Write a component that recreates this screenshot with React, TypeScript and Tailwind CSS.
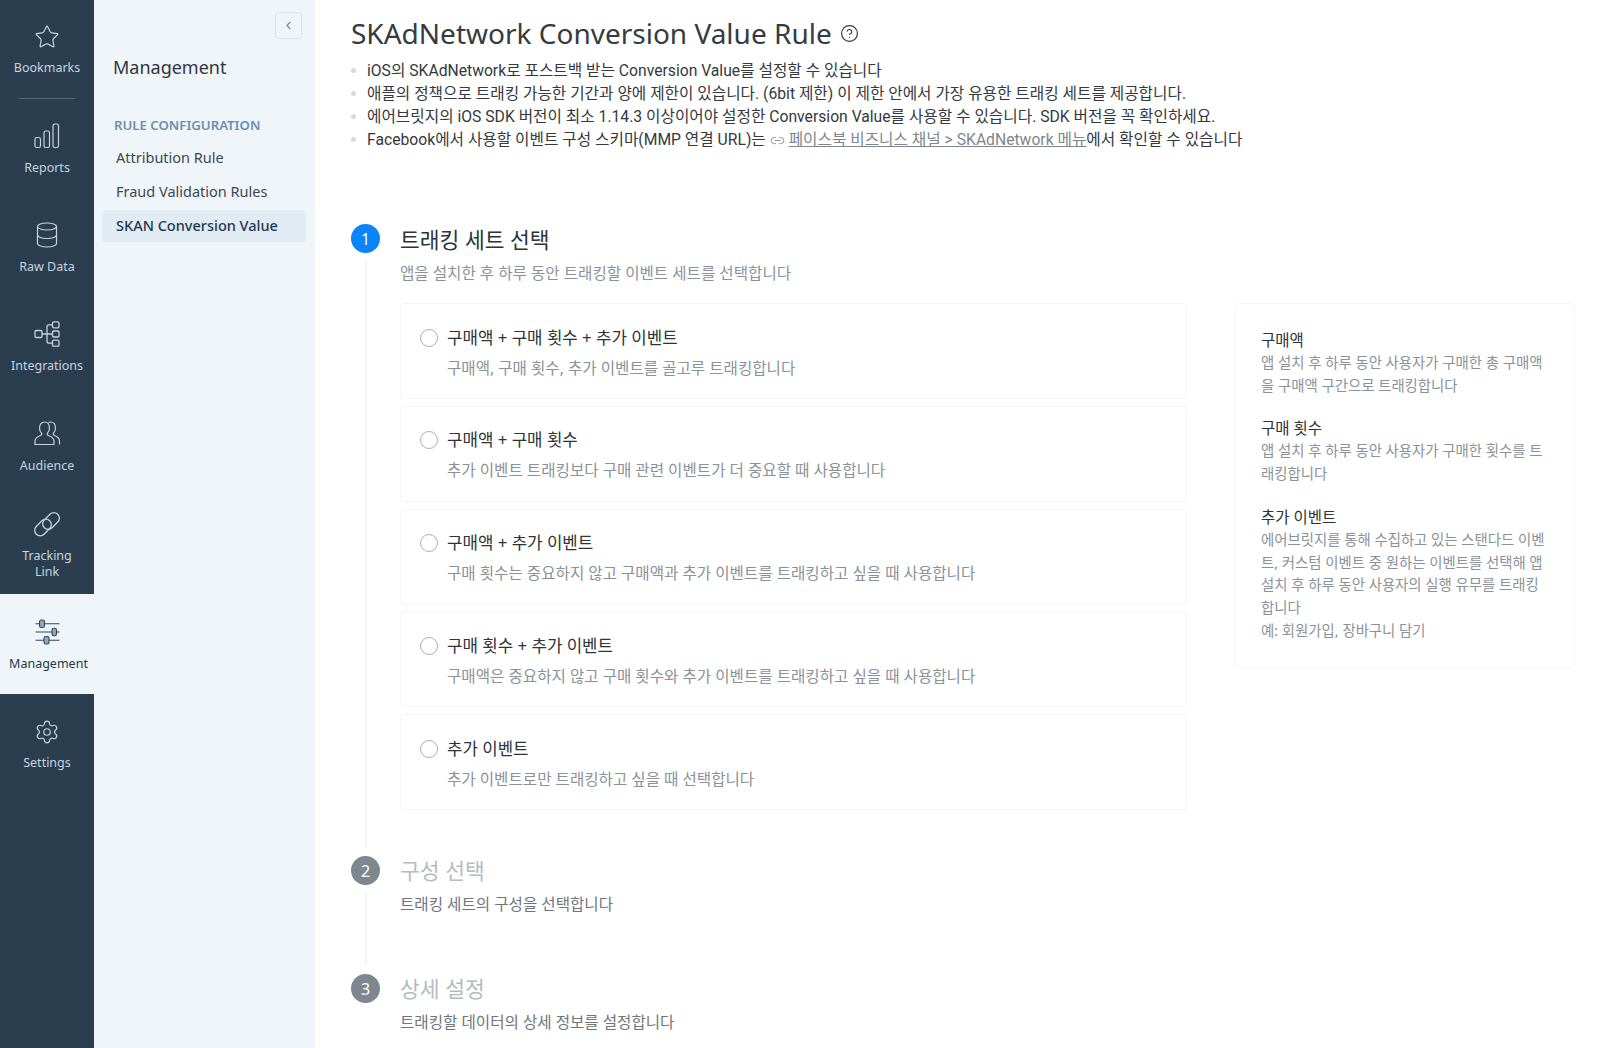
import type { ReactNode } from "react";
import { ChevronLeft, CircleHelp, Link2, Settings, Star } from "lucide-react";

const font = { fontFamily: '"Noto Sans", "Noto Sans CJK KR", sans-serif' };
const listFont = { fontFamily: 'Roboto, "Noto Sans CJK KR", sans-serif' };

function ReportsIcon() {
  return (
    <svg width="26" height="26" viewBox="0 0 26 26" fill="none" stroke="currentColor" strokeWidth="1.2">
      <rect x="1" y="14.5" width="5.5" height="10" rx="1.8" />
      <rect x="10" y="8" width="5.5" height="16.5" rx="1.8" />
      <rect x="19" y="1" width="5.5" height="23.5" rx="1.8" />
    </svg>
  );
}

function DataIcon() {
  return (
    <svg width="24" height="26" viewBox="0 0 24 26" fill="none" stroke="currentColor" strokeWidth="1.2">
      <ellipse cx="12" cy="4.5" rx="9.5" ry="3.5" />
      <path d="M2.5 4.5v17c0 2 4.3 3.5 9.5 3.5s9.5-1.5 9.5-3.5v-17" />
      <path d="M2.5 13c0 2 4.3 3.5 9.5 3.5s9.5-1.5 9.5-3.5" />
    </svg>
  );
}

function IntegrationsIcon() {
  return (
    <svg width="26" height="26" viewBox="0 0 26 26" fill="none" stroke="currentColor" strokeWidth="1.3">
      <rect x="1" y="9.5" width="7" height="7" rx="1.2" />
      <rect x="18.5" y="0.8" width="6.5" height="6" rx="1.2" />
      <rect x="18.5" y="10" width="6.5" height="6" rx="1.2" />
      <rect x="18.5" y="19.2" width="6.5" height="6" rx="1.2" />
      <path d="M8 13h10.5M13 13V5.800a2 2 0 0 1 2-2h3.500M13 13v7.200a2 2 0 0 0 2 2h3.500" />
    </svg>
  );
}

function AudienceIcon() {
  return (
    <svg width="27" height="25" viewBox="0 0 27 25" fill="none" stroke="currentColor" strokeWidth="1.2">
      <path d="M1 23.500V20c0-3 3-4.500 5.500-5.500 1-.5 1.500-1 1.300-2-1.500-1.200-2.300-3-2.300-5.200C5.500 3.500 7.500 1 10.500 1s5 2.500 5 6.300c0 2.200-.8 4-2.300 5.200-.2 1 .3 1.500 1.300 2 2.500 1 5.500 2.500 5.500 5.500v3.500z" />
      <path d="M14.500 1.500c.7-.3 1.300-.5 2-.5 3 0 5 2.500 5 6.300 0 2.200-.8 4-2.300 5.200-.2 1 .3 1.500 1.300 2 2.500 1 5 2.500 5 5.500v3.500" />
    </svg>
  );
}

function LinkIcon() {
  return (
    <svg width="28" height="27" viewBox="0 0 28 27" fill="none" stroke="currentColor" strokeWidth="1.3">
      <rect x="8.500" y="4.500" width="19" height="11" rx="5.500" transform="rotate(-45 18 10)" />
      <rect x="0.500" y="11" width="19" height="11" rx="5.500" transform="rotate(-45 10 16.500)" />
    </svg>
  );
}

function SlidersIcon() {
  return (
    <svg width="27" height="26" viewBox="0 0 27 26" fill="none" stroke="#33475b" strokeWidth="1.1">
      <path d="M1.500 4.800h4M10.500 4.800h15M1.500 13h16.500M22.500 13h3M1.500 21.200h8.500M15 21.200h10.500" />
      <rect x="5.500" y="1" width="5" height="7.500" rx="1.800" fill="#8fa6c0" />
      <rect x="18" y="9.200" width="4.500" height="7.500" rx="1.800" fill="#8fa6c0" />
      <rect x="10" y="17.500" width="5" height="7.500" rx="1.800" fill="#8fa6c0" />
    </svg>
  );
}

function RailItem({ icon, label, active, divider, low, tight }: { icon: ReactNode; label: ReactNode; active?: boolean; divider?: boolean; low?: boolean; tight?: boolean }) {
  return (
    <div className={`flex flex-col items-center ${low ? "pt-[24px]" : "pt-[23px]"} ${active ? "h-[100px] bg-[#f0f5f9] text-[#2b3f52]" : "h-[99px] text-[#c5d3df]"}`}>
      <div className="flex h-[27px] items-center justify-center">{icon}</div>
      <div className={`text-center text-[12.5px] leading-[16px] ${tight ? "mt-[10px]" : "mt-[11px]"} ${active ? "pl-[3px] text-[#24384b]" : ""}`}>{label}</div>
      {divider && <div className="mt-[22px] h-px w-[56px] bg-[#51677c]" />}
    </div>
  );
}

function Step({ n, active, title, sub, line, children }: { n: number; active?: boolean; title: string; sub: string; line: boolean; children?: ReactNode }) {
  return (
    <div className="flex h-full gap-[20px]">
      <div className="flex w-[29px] shrink-0 flex-col items-center">
        <div className={`flex h-[29px] w-[29px] items-center justify-center rounded-full text-[16px] text-white ${active ? "bg-[#0a84fa]" : "bg-[#7f878e]"}`}>{n}</div>
        {line && <div className="mb-[8px] mt-[7px] w-[2px] flex-1 bg-[#f3f5f7]" />}
      </div>
      <div className="flex-1">
        <div className={`h-[29px] text-[21.5px] ${active ? "leading-[31px] text-[#2c3438]" : "leading-[29px] text-[#b4bcc2]"}`}>{title}</div>
        <div className={`text-[15.6px] leading-[22px] ${active ? "mt-[9px] text-[#8a9298]" : "mt-[8px] text-[#6e767c]"}`}>{sub}</div>
        {children}
      </div>
    </div>
  );
}

const options = [
  ["구매액 + 구매 횟수 + 추가 이벤트", "구매액, 구매 횟수, 추가 이벤트를 골고루 트래킹합니다"],
  ["구매액 + 구매 횟수", "추가 이벤트 트래킹보다 구매 관련 이벤트가 더 중요할 때 사용합니다"],
  ["구매액 + 추가 이벤트", "구매 횟수는 중요하지 않고 구매액과 추가 이벤트를 트래킹하고 싶을 때 사용합니다"],
  ["구매 횟수 + 추가 이벤트", "구매액은 중요하지 않고 구매 횟수와 추가 이벤트를 트래킹하고 싶을 때 사용합니다"],
  ["추가 이벤트", "추가 이벤트로만 트래킹하고 싶을 때 선택합니다"],
];

const notes = [
  { title: "구매액", body: ["앱 설치 후 하루 동안 사용자가 구매한 총 구매액", "을 구매액 구간으로 트래킹합니다"] },
  { title: "구매 횟수", body: ["앱 설치 후 하루 동안 사용자가 구매한 횟수를 트", "래킹합니다"] },
  {
    title: "추가 이벤트",
    body: ["에어브릿지를 통해 수집하고 있는 스탠다드 이벤", "트, 커스텀 이벤트 중 원하는 이벤트를 선택해 앱", "설치 후 하루 동안 사용자의 실행 유무를 트래킹", "합니다", "예: 회원가입, 장바구니 담기"],
  },
];

const bullets: ReactNode[] = [
  "iOS의 SKAdNetwork로 포스트백 받는 Conversion Value를 설정할 수 있습니다",
  "애플의 정책으로 트래킹 가능한 기간과 양에 제한이 있습니다. (6bit 제한) 이 제한 안에서 가장 유용한 트래킹 세트를 제공합니다.",
  "에어브릿지의 iOS SDK 버전이 최소 1.14.3 이상이어야 설정한 Conversion Value를 사용할 수 있습니다. SDK 버전을 꼭 확인하세요.",
  <>
    Facebook에서 사용할 이벤트 구성 스키마(MMP 연결 URL)는{" "}
    <Link2 className="inline h-[15px] w-[15px] text-[#8a9298]" strokeWidth={1.5} />{" "}
    <span className="text-[#7d868c] underline">페이스북 비즈니스 채널 &gt; SKAdNetwork 메뉴</span>에서 확인할 수 있습니다
  </>,
];

export default function App() {
  return (
    <div className="flex h-[1048px] w-[1600px] overflow-hidden bg-white" style={font}>
      <nav className="w-[94px] shrink-0 bg-[#2b3e50]">
        <RailItem icon={<Star size={26} strokeWidth={1.1} />} label="Bookmarks" divider tight />
        <RailItem icon={<ReportsIcon />} label="Reports" />
        <RailItem icon={<DataIcon />} label="Raw Data" />
        <RailItem icon={<IntegrationsIcon />} label="Integrations" />
        <RailItem icon={<AudienceIcon />} label="Audience" low />
        <div className="flex h-[99px] flex-col items-center pt-[16px] text-[#c5d3df]">
          <LinkIcon />
          <div className="mt-[10px] text-center text-[12.5px] leading-[16px]">Tracking<br />Link</div>
        </div>
        <RailItem icon={<SlidersIcon />} label="Management" active low />
        <RailItem icon={<Settings size={26} strokeWidth={1.1} />} label="Settings" low tight />
      </nav>

      <aside className="flex w-[221px] shrink-0 flex-col bg-[#f0f5f9] pl-[8px] pr-[9px]">
        <div className="flex justify-end pr-[4px] pt-[12px]">
          <div className="flex h-[27px] w-[27px] items-center justify-center rounded border border-[#dde3e8] text-[#7d8a96]">
            <ChevronLeft size={13} />
          </div>
        </div>
        <div className="mt-[13px] pl-[11px] text-[18px] leading-[30px] text-[#2f373d]">Management</div>
        <div className="mt-[34px] pl-[12px] text-[13.2px] font-semibold leading-[18px] text-[#6a8fb0]">RULE CONFIGURATION</div>
        <div className="mt-[8px] flex flex-col gap-[2px] text-[14.5px] text-[#3c4850]">
          <div className="flex h-[32px] items-center pl-[14px]">Attribution Rule</div>
          <div className="flex h-[32px] items-center pl-[14px]">Fraud Validation Rules</div>
          <div className="flex h-[32px] items-center rounded bg-[#e1ebf3] pl-[14px] font-medium text-[#1f3850]">SKAN Conversion Value</div>
        </div>
      </aside>

      <main className="min-w-0 flex-1 pl-[36px] pr-[26px]">
        <h1 className="mt-[14px] flex items-center gap-[8px] text-[28px] leading-[38px] text-[#353c41]">
          SKAdNetwork Conversion Value Rule
          <CircleHelp size={19} strokeWidth={1.5} />
        </h1>
        <ul className="mt-[7px] flex flex-col text-[15.7px] leading-[23px] text-[#33393e]" style={listFont}>
          {bullets.map((b, i) => (
            <li key={i} className="flex items-center gap-[11px] whitespace-nowrap">
              <span className="h-[5px] w-[5px] shrink-0 rounded-full bg-[#d5dade]" />
              <span>{b}</span>
            </li>
          ))}
        </ul>

        <div className="mt-[73px] flex flex-col">
          <div className="h-[632px]">
            <Step n={1} active title="트래킹 세트 선택" sub="앱을 설치한 후 하루 동안 트래킹할 이벤트 세트를 선택합니다" line>
              <div className="mt-[19px] flex items-start gap-[48px]">
                <div className="flex w-[787px] shrink-0 flex-col gap-[6.8px]">
                  {options.map(([title, sub]) => (
                    <div key={title} className="flex h-[96px] gap-[9px] rounded border border-[#f3f5f7] pl-[19px] pt-[19.5px]">
                      <span className="mt-[5px] h-[18px] w-[18px] shrink-0 rounded-full border border-[#a9b0b5]" />
                      <div>
                        <div className="text-[16.8px] leading-[28px] text-[#2c3438]">{title}</div>
                        <div className="mt-[4px] text-[15.6px] leading-[24px] text-[#8a9298]">{sub}</div>
                      </div>
                    </div>
                  ))}
                </div>
                <div className="flex w-[340px] shrink-0 flex-col gap-[20px] rounded-md border border-[#f3f5f7] px-[25px] pb-[26px] pt-[25px]">
                  {notes.map((note) => (
                    <div key={note.title}>
                      <div className="text-[15.5px] leading-[23px] text-[#2c3438]">{note.title}</div>
                      {note.body.map((line) => (
                        <div key={line} className="whitespace-nowrap text-[14.4px] leading-[22.7px] text-[#8a9298]">{line}</div>
                      ))}
                    </div>
                  ))}
                </div>
              </div>
            </Step>
          </div>
          <div className="h-[118px]">
            <Step n={2} title="구성 선택" sub="트래킹 세트의 구성을 선택합니다" line />
          </div>
          <Step n={3} title="상세 설정" sub="트래킹할 데이터의 상세 정보를 설정합니다" line={false} />
        </div>
      </main>
    </div>
  );
}
